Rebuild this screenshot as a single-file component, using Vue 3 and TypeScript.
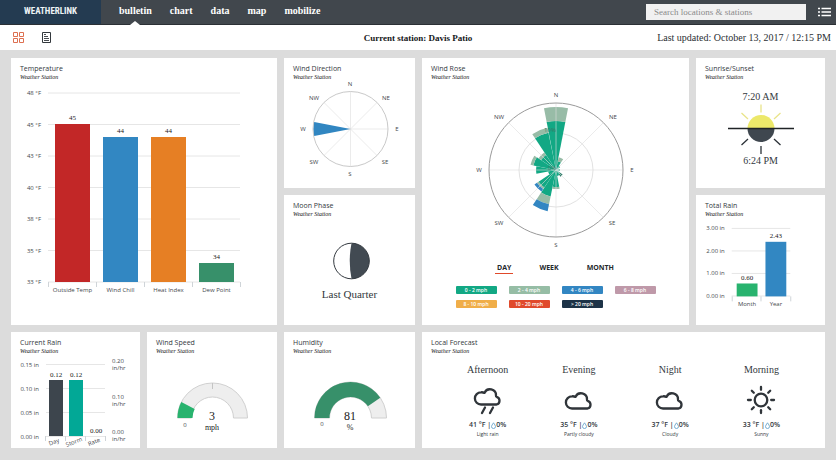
<script setup lang="ts">
import { ref } from 'vue'

interface Bar { label: string; value: string; x: number; y: number; w: number; color: string }
interface Mark { text: string; x: number; y: number }
interface Petal { angle: number; bands: [number, string][] }

const navItems = ['bulletin', 'chart', 'data', 'map', 'mobilize']
const activeNav = ref('bulletin')
const query = ref('')
const periods = ['DAY', 'WEEK', 'MONTH']
const period = ref('DAY')

const polar = (cx: number, cy: number, r: number, deg: number): string => {
  const a = (deg * Math.PI) / 180
  return `${(cx + r * Math.sin(a)).toFixed(2)} ${(cy - r * Math.cos(a)).toFixed(2)}`
}

// Ring segment between two compass bearings
const sector = (cx: number, cy: number, r0: number, r1: number, from: number, to: number): string =>
  `M${polar(cx, cy, r0, from)}L${polar(cx, cy, r1, from)}` +
  `A${r1} ${r1} 0 0 1 ${polar(cx, cy, r1, to)}L${polar(cx, cy, r0, to)}` +
  (r0 > 0 ? `A${r0} ${r0} 0 0 0 ${polar(cx, cy, r0, from)}Z` : 'Z')

const tempTicks = ['48 °F', '45 °F', '43 °F', '40 °F', '38 °F', '35 °F', '33 °F']
const tempBars: Bar[] = [
  { label: 'Outside Temp', value: '45', x: 43, y: 43, w: 35, color: '#c22727' },
  { label: 'Wind Chill', value: '44', x: 91, y: 56, w: 35, color: '#3287c2' },
  { label: 'Heat Index', value: '44', x: 139, y: 56, w: 35, color: '#e67f24' },
  { label: 'Dew Point', value: '34', x: 187, y: 182, w: 35, color: '#37906a' },
]

const totalTicks = ['3.00 in', '2.00 in', '1.00 in', '0.00 in']
const totalBars: Bar[] = [
  { label: 'Month', value: '0.60', x: 41, y: 66, w: 21, color: '#28b36e' },
  { label: 'Year', value: '2.43', x: 70, y: 24, w: 21, color: '#3287c2' },
]

const rainTicks = ['0.15 in', '0.10 in', '0.05 in', '0.00 in']
const rateTicks = ['0.20', '0.10', '0.00']
const rainBars: Bar[] = [
  { label: 'Day', value: '0.12', x: 38, y: 25, w: 14, color: '#3d454d' },
  { label: 'Storm', value: '0.12', x: 58, y: 25, w: 14, color: '#02a896' },
  { label: 'Rate', value: '0.00', x: 78, y: 81, w: 14, color: '#3287c2' },
]

const windMarks: Mark[] = [
  { text: 'N', x: 65, y: 3 }, { text: 'NE', x: 101, y: 17 }, { text: 'E', x: 112, y: 48 }, { text: 'SE', x: 100, y: 81 },
  { text: 'S', x: 65, y: 93 }, { text: 'SW', x: 29, y: 81 }, { text: 'W', x: 18, y: 48 }, { text: 'NW', x: 29, y: 17 },
]
const roseMarks: Mark[] = [
  { text: 'N', x: 133, y: 14 }, { text: 'NE', x: 190, y: 36 }, { text: 'E', x: 209, y: 89 }, { text: 'SE', x: 189, y: 142 },
  { text: 'S', x: 133, y: 164 }, { text: 'SW', x: 76, y: 142 }, { text: 'W', x: 56, y: 89 }, { text: 'NW', x: 76, y: 36 },
]

const calm = '#12a884'
const light = '#98bca7'
const brisk = '#3286c2'
const petals: Petal[] = [
  { angle: 0, bands: [[49, calm], [63, light]] },
  { angle: 22.5, bands: [[9, calm], [13, light]] },
  { angle: 45, bands: [[5, calm]] },
  { angle: 90, bands: [[4, calm]] },
  { angle: 135, bands: [[5, calm], [8, '#2f7f6c']] },
  { angle: 157.5, bands: [[6, calm]] },
  { angle: 180, bands: [[17, calm], [19, light]] },
  { angle: 202.5, bands: [[27, calm], [35, light], [42, brisk]] },
  { angle: 225, bands: [[21, calm], [23, light], [26, brisk]] },
  { angle: 247.5, bands: [[8, calm]] },
  { angle: 270, bands: [[20, calm]] },
  { angle: 292.5, bands: [[23, calm], [26, light]] },
  { angle: 315, bands: [[18, calm], [21, light]] },
  { angle: 337.5, bands: [[38, calm], [43, light]] },
]
const petalPaths = petals.flatMap((p) =>
  p.bands.map(([r, color], i) => ({
    color,
    d: sector(133, 89, i ? p.bands[i - 1][0] : 0, r, p.angle - 11, p.angle + 11),
  })),
)

const legend = [
  { text: '0 - 2 mph', tone: 'teal' }, { text: '2 - 4 mph', tone: 'sage' },
  { text: '4 - 6 mph', tone: 'blue' }, { text: '6 - 8 mph', tone: 'mauve' },
  { text: '8 - 10 mph', tone: 'amber' }, { text: '10 - 20 mph', tone: 'red' },
  { text: '> 20 mph', tone: 'navy' },
]

const forecast = [
  { name: 'Afternoon', icon: 'rain', temp: '41 °F', rain: '0%', text: 'Light rain' },
  { name: 'Evening', icon: 'cloud', temp: '35 °F', rain: '0%', text: 'Partly cloudy' },
  { name: 'Night', icon: 'cloud', temp: '37 °F', rain: '0%', text: 'Cloudy' },
  { name: 'Morning', icon: 'sun', temp: '33 °F', rain: '0%', text: 'Sunny' },
]
const rays = [0, 45, 90, 135, 180, 225, 270, 315]
</script>

<template>
  <div class="page">
    <header class="topbar">
      <a class="logo" href="#">WEATHERLINK</a>
      <nav class="nav">
        <a
          v-for="item in navItems"
          :key="item"
          href="#"
          :class="{ active: item === activeNav }"
          @click.prevent="activeNav = item"
        >{{ item }}</a>
      </nav>
      <input v-model="query" class="search" type="search" placeholder="Search locations &amp; stations" aria-label="Search locations and stations">
      <button class="icon-btn menu" type="button" aria-label="Menu">
        <svg width="13" height="10" viewBox="0 0 13 10" fill="none" stroke="#fff">
          <path d="M0 1.5h2M0 5h2M0 8.5h2" stroke-width="1.6" />
          <path d="M3.5 1.5H13M3.5 5H13M3.5 8.5H13" stroke-width="1.3" />
        </svg>
      </button>
    </header>

    <div class="subbar">
      <div class="views">
        <button class="icon-btn" type="button" aria-label="Grid view">
          <svg width="11" height="11" viewBox="0 0 11 11" fill="none" stroke="#dd6f50">
            <path d="M.5 .5h4v4h-4zM6.500 .5h4v4h-4zM.5 6.500h4v4h-4zM6.500 6.500h4v4h-4z" />
          </svg>
        </button>
        <button class="icon-btn" type="button" aria-label="Report view">
          <svg width="9" height="11" viewBox="0 0 9 11" fill="none" stroke="#33383d">
            <path d="M.5 .5h8v10h-8z" />
            <path d="M2 2.500h2M2 4.500h4M2 6.500h5M2 8.500h5" stroke-width=".9" />
          </svg>
        </button>
      </div>
      <h1>Current station: Davis Patio</h1>
      <p class="updated">Last updated: October 13, 2017 / 12:15 PM</p>
    </div>

    <main class="board">
      <section class="card big">
        <h2>Temperature</h2>
        <p class="sub">Weather Station</p>
        <svg class="chart" width="265" height="215" viewBox="0 0 265 215">
          <g v-for="(t, i) in tempTicks" :key="t">
            <line class="rule" x1="36" x2="228" :y1="12 + 31.5 * i" :y2="12 + 31.5 * i" />
            <text class="axis end" x="29" :y="12 + 31.5 * i">{{ t }}</text>
          </g>
          <path class="tick" d="M36.500 201v5M84.500 201v5M132.500 201v5M180.500 201v5M228.500 201v5" />
          <g v-for="b in tempBars" :key="b.label">
            <rect :x="b.x" :y="b.y" :width="b.w" :height="201 - b.y" :fill="b.color" />
            <text class="value" :x="b.x + b.w / 2" :y="b.y - 6">{{ b.value }}</text>
            <text class="axis" :x="b.x + b.w / 2" y="209">{{ b.label }}</text>
          </g>
        </svg>
      </section>

      <section class="card">
        <h2>Wind Direction</h2>
        <p class="sub">Weather Station</p>
        <svg class="chart" width="130" height="100" viewBox="0 0 130 100">
          <path class="spoke" d="M65.500 10.500v75M28 48h75M39 21.500l53 53M92 21.500l-53 53" />
          <circle class="ring" cx="65.500" cy="48" r="37.500" />
          <path :d="sector(65.5, 48, 0, 37, 259, 281)" fill="#3186c1" />
          <text v-for="m in windMarks" :key="m.text" class="axis" :x="m.x" :y="m.y">{{ m.text }}</text>
        </svg>
      </section>

      <section class="card big">
        <h2>Wind Rose</h2>
        <p class="sub">Weather Station</p>
        <svg class="chart" width="266" height="172" viewBox="0 0 266 172">
          <circle class="ring inner" cx="133" cy="89" r="37" />
          <path v-for="(p, i) in petalPaths" :key="i" :d="p.d" :fill="p.color" />
          <path class="spoke" d="M133 22v134M66 89h134M85.600 41.600l94.800 94.800M180.400 41.600l-94.800 94.800" />
          <circle class="ring outer" cx="133" cy="89" r="67" />
          <text class="axis faint" x="127" y="49">10%</text>
          <text class="axis faint" x="129" y="87">0%</text>
          <text v-for="m in roseMarks" :key="m.text" class="axis" :x="m.x" :y="m.y">{{ m.text }}</text>
        </svg>
        <div class="tabs">
          <button
            v-for="p in periods"
            :key="p"
            type="button"
            :class="{ active: p === period }"
            @click="period = p"
          >{{ p }}</button>
        </div>
        <ul class="legend">
          <li v-for="l in legend" :key="l.text" :class="l.tone">{{ l.text }}</li>
        </ul>
      </section>

      <section class="card">
        <h2>Sunrise/Sunset</h2>
        <p class="sub">Weather Station</p>
        <div class="sun">
          <p class="reading">7:20 AM</p>
          <svg class="chart" width="66" height="50" viewBox="0 0 66 50" fill="none">
            <path d="M19.500 24.500a13.500 13.500 0 0 1 27 0z" fill="#ece86a" />
            <path d="M19.500 24.500a13.500 13.500 0 0 0 27 0z" fill="#3f474f" />
            <path d="M33 0.500v8M13.500 9l6.500 6M52.500 9l-6.500 6" stroke="#e9e48a" stroke-width="1.300" />
            <path d="M33 42v8M13.500 41l6.500-6M52.500 41l-6.500-6" stroke="#2c3238" stroke-width="1.300" />
            <path d="M0 24.500h66" stroke="#1f2326" stroke-width="1.300" />
          </svg>
          <p class="reading">6:24 PM</p>
        </div>
      </section>

      <section class="card">
        <h2>Moon Phase</h2>
        <p class="sub">Weather Station</p>
        <svg class="chart" width="130" height="69" viewBox="0 0 130 69">
          <circle cx="66.500" cy="43" r="17.800" fill="#fff" />
          <path d="M66.500 25.200a17.800 17.800 0 0 1 0 35.600q-3.500-17.800 0-35.600z" fill="#424a52" />
          <circle cx="66.500" cy="43" r="17.800" fill="none" stroke="#33393f" />
        </svg>
        <p class="reading large">Last Quarter</p>
      </section>

      <section class="card">
        <h2>Total Rain</h2>
        <p class="sub">Weather Station</p>
        <svg class="chart" width="130" height="94" viewBox="0 0 130 94">
          <g v-for="(t, i) in totalTicks" :key="t">
            <line class="rule" x1="36" x2="95" :y1="10.5 + 22.7 * i" :y2="10.5 + 22.7 * i" />
            <text class="axis end" x="29" :y="10.5 + 22.7 * i">{{ t }}</text>
          </g>
          <path class="tick" d="M36.500 79v5M65.500 79v5M95.500 79v5" />
          <g v-for="b in totalBars" :key="b.label">
            <rect :x="b.x" :y="b.y" :width="b.w" :height="79 - b.y" :fill="b.color" />
            <text class="value" :x="b.x + b.w / 2" :y="b.y - 6">{{ b.value }}</text>
            <text class="axis" :x="b.x + b.w / 2" y="87">{{ b.label }}</text>
          </g>
        </svg>
      </section>

      <section class="card">
        <h2>Current Rain</h2>
        <p class="sub">Weather Station</p>
        <svg class="chart" width="129" height="93" viewBox="0 0 129 93">
          <g v-for="(t, i) in rainTicks" :key="t">
            <line class="rule" x1="35" x2="94" :y1="9.5 + 24 * i" :y2="9.5 + 24 * i" />
            <text class="axis end" x="28" :y="9.5 + 24 * i">{{ t }}</text>
          </g>
          <g v-for="(t, i) in rateTicks" :key="t">
            <text class="axis start" x="101" :y="6 + 35.5 * i">{{ t }}</text>
            <text class="axis start" x="101" :y="13 + 35.5 * i">in/hr</text>
          </g>
          <path class="tick" d="M34.500 81v5M54.500 81v5M74.500 81v5M94.500 81v5" />
          <g v-for="b in rainBars" :key="b.label">
            <rect :x="b.x" :y="b.y" :width="b.w" :height="81 - b.y" :fill="b.color" />
            <text class="value" :x="b.x + b.w / 2" :y="b.y - 5">{{ b.value }}</text>
            <text class="axis" :x="b.x + b.w / 2 - 2" y="87" :transform="`rotate(-22 ${b.x + b.w / 2 - 2} 87)`">{{ b.label }}</text>
          </g>
        </svg>
      </section>

      <section class="card">
        <h2>Wind Speed</h2>
        <p class="sub">Weather Station</p>
        <svg class="chart" width="129" height="86" viewBox="0 0 129 86">
          <path class="track" :d="sector(64.5, 63, 21, 35, -90, 90)" />
          <path d="M64.500 28v6" stroke="#c4c4c4" />
          <path :d="sector(64.5, 63, 20, 35, -90, -63)" fill="#28b36e" />
          <text class="axis" x="37" y="70">0</text>
          <text class="value number" x="64" y="61">3</text>
          <text class="value unit" x="64" y="72">mph</text>
        </svg>
      </section>

      <section class="card">
        <h2>Humidity</h2>
        <p class="sub">Weather Station</p>
        <svg class="chart" width="130" height="86" viewBox="0 0 130 86">
          <path class="track" :d="sector(65.5, 63, 21, 36, -90, 90)" />
          <path :d="sector(65.5, 63, 21, 36, -90, 55.8)" fill="#37906a" />
          <text class="axis" x="37" y="69">0</text>
          <text class="value number" x="65" y="61">81</text>
          <text class="value unit" x="65" y="72">%</text>
        </svg>
      </section>

      <section class="card wide">
        <h2>Local Forecast</h2>
        <p class="sub">Weather Station</p>
        <ul class="forecast">
          <li v-for="f in forecast" :key="f.name">
            <h3>{{ f.name }}</h3>
            <svg width="30" height="30" viewBox="0 0 30 30" fill="none" stroke="#30353a" stroke-width="2.3" stroke-linecap="round" stroke-linejoin="round">
              <template v-if="f.icon === 'sun'">
                <circle cx="15" cy="15" r="6.300" />
                <path v-for="r in rays" :key="r" d="M15 2v2.800" :transform="`rotate(${r} 15 15)`" />
              </template>
              <path
                v-else
                :transform="f.icon === 'rain' ? 'translate(0 -4)' : ''"
                d="M8 23.500a6 6 0 0 1 0-12.200q2-.2 3.500.6a6 6 0 0 1 11.500 2.600q-.1 1 .6 1.300a4 4 0 0 1 0 7.700z"
              />
              <path v-if="f.icon === 'rain'" d="M12 22.500l-3 5.500M20 22.500l-3 5.500" />
            </svg>
            <p class="temp">
              {{ f.temp }} |<svg width="5" height="7" viewBox="0 0 5 7" fill="none" stroke="#5b9cc6" stroke-width=".8"><path d="M2.500 .8Q4.500 3.400 4.500 4.600a2 1.900 0 0 1-4 0Q.5 3.400 2.500 .8z" /></svg>{{ f.rain }}
            </p>
            <p class="text">{{ f.text }}</p>
          </li>
        </ul>
      </section>
    </main>
  </div>
</template>

<style>
html { background: #dcdcdc; }
body { margin: 0; }
</style>

<style scoped>
.page {
  font-family: "Open Sans", "Noto Sans", sans-serif;
  color: #33383d;
}
h1, h2, h3, p, ul { margin: 0; padding: 0; list-style: none; }
button { padding: 0; border: 0; background: none; font: inherit; color: inherit; cursor: pointer; }
.icon-btn svg { display: block; }

.topbar {
  display: flex;
  align-items: center;
  height: 25px;
  box-sizing: border-box;
  padding-right: 5px;
  background: #41474d;
  border-bottom: 1px solid #2b3035;
}
.logo {
  flex: 0 0 101px;
  align-self: stretch;
  background: #243b51;
  color: #eef2f5;
  font: bold 9px/22px "Liberation Sans Narrow", "Roboto Condensed", "Liberation Sans", sans-serif;
  text-align: center;
  text-decoration: none;
}
.nav {
  display: flex;
  gap: 18px;
  align-self: stretch;
  flex: 1;
  padding-left: 18px;
}
.nav a {
  position: relative;
  color: #fff;
  font: bold 10px/22px "Liberation Serif", serif;
  text-decoration: none;
}
.nav a.active::after {
  content: "";
  position: absolute;
  left: 50%;
  bottom: -1px;
  margin-left: -5px;
  border: 5px solid transparent;
  border-top: 0;
  border-bottom: 4px solid #fff;
}
.search {
  width: 160px;
  height: 16px;
  box-sizing: border-box;
  padding: 0 8px;
  border: 0;
  border-radius: 0;
  background: #f1f1f1;
  font: 9px/16px "Liberation Serif", serif;
  color: #333;
  appearance: none;
}
.search::placeholder { color: #8a8a8a; opacity: 1; }
.menu { margin-left: 12px; }

.subbar {
  display: grid;
  grid-template-columns: 1fr auto 1fr;
  align-items: center;
  height: 25px;
  padding: 0 5px;
  background: #fff;
}
.views { display: flex; gap: 18px; padding-left: 8px; }
.subbar h1 { font: bold 9px/12px "Liberation Serif", serif; color: #16181a; }
.updated { font: 10px/12px "Liberation Serif", serif; color: #2b2f33; text-align: right; }

.board {
  display: grid;
  grid-template-columns: 129fr 130fr 131fr 130fr 130fr 129fr;
  grid-template-rows: minmax(130px, auto) minmax(130px, auto) minmax(116px, auto);
  gap: 7px;
  padding: 8px 11px 12px;
}
.card {
  min-width: 0;
  background: #fff;
}
.card.big { grid-row: span 2; grid-column: span 2; }
.card.wide { grid-column: span 3; }
.card h2 {
  padding: 6px 9px 0;
  font-size: 7px;
  line-height: 9px;
  font-weight: 400;
}
.card .sub {
  padding: 0 9px;
  font: italic 6px/8px "Liberation Serif", serif;
  color: #111;
}
.chart {
  display: block;
  max-width: 100%;
  height: auto;
  margin: 0 auto;
}
.axis {
  font-size: 6px;
  fill: #44484c;
  text-anchor: middle;
  dominant-baseline: central;
}
.axis.end { text-anchor: end; }
.axis.start { text-anchor: start; }
.axis.faint { fill: #3f7564; }
.value {
  font: 7px "Liberation Serif", serif;
  fill: #222;
  text-anchor: middle;
  dominant-baseline: central;
}
.value.number { font-size: 12px; }
.value.unit { font-size: 8px; }
.rule { stroke: #e6e6e6; }
.tick { stroke: #cfd4d8; }
.spoke { stroke: #dedede; stroke-opacity: 0.6; fill: none; }
.ring { fill: none; stroke: #c9c9c9; }
.ring.inner { stroke: #e2e2e2; }
.ring.outer { stroke: #9a9a9a; }
.track { fill: #eee; stroke: #d0d0d0; }

.tabs {
  display: flex;
  justify-content: center;
  gap: 24px;
  padding-top: 10px;
}
.tabs button {
  padding: 0 2px;
  border-bottom: 1px solid transparent;
  font-size: 7px;
  line-height: 10px;
  font-weight: 700;
  color: #24282c;
}
.tabs button.active { border-bottom: 1px solid #e0492a; }
.legend {
  display: grid;
  grid-template-columns: repeat(4, 41px);
  justify-content: center;
  gap: 6px 12px;
  padding-top: 12px;
}
.legend li {
  border-radius: 1px;
  color: #fff;
  font-size: 5px;
  line-height: 8px;
  font-weight: 600;
  text-align: center;
}
.teal { background: #12a884; }
.sage { background: #96bda5; }
.blue { background: #3286c2; }
.mauve { background: #bf99a9; }
.amber { background: #f0ae49; }
.red { background: #e04a2c; }
.navy { background: #1d3347; }

.reading {
  font: 10px/14px "Liberation Serif", serif;
  text-align: center;
}
.reading.large { font-size: 11px; }
.sun { padding-top: 9px; }

.forecast {
  display: grid;
  grid-template-columns: repeat(4, 1fr);
  padding: 8px 18px 0 20px;
}
.forecast li {
  display: flex;
  flex-direction: column;
  align-items: center;
}
.forecast h3 { font: 10px/14px "Liberation Serif", serif; }
.forecast li > svg { display: block; margin: 8px 0 5px; }
.temp {
  display: flex;
  align-items: center;
  font-size: 7px;
  line-height: 10px;
  font-weight: 600;
  white-space: pre;
}
.text { font-size: 5px; line-height: 9px; }
</style>
